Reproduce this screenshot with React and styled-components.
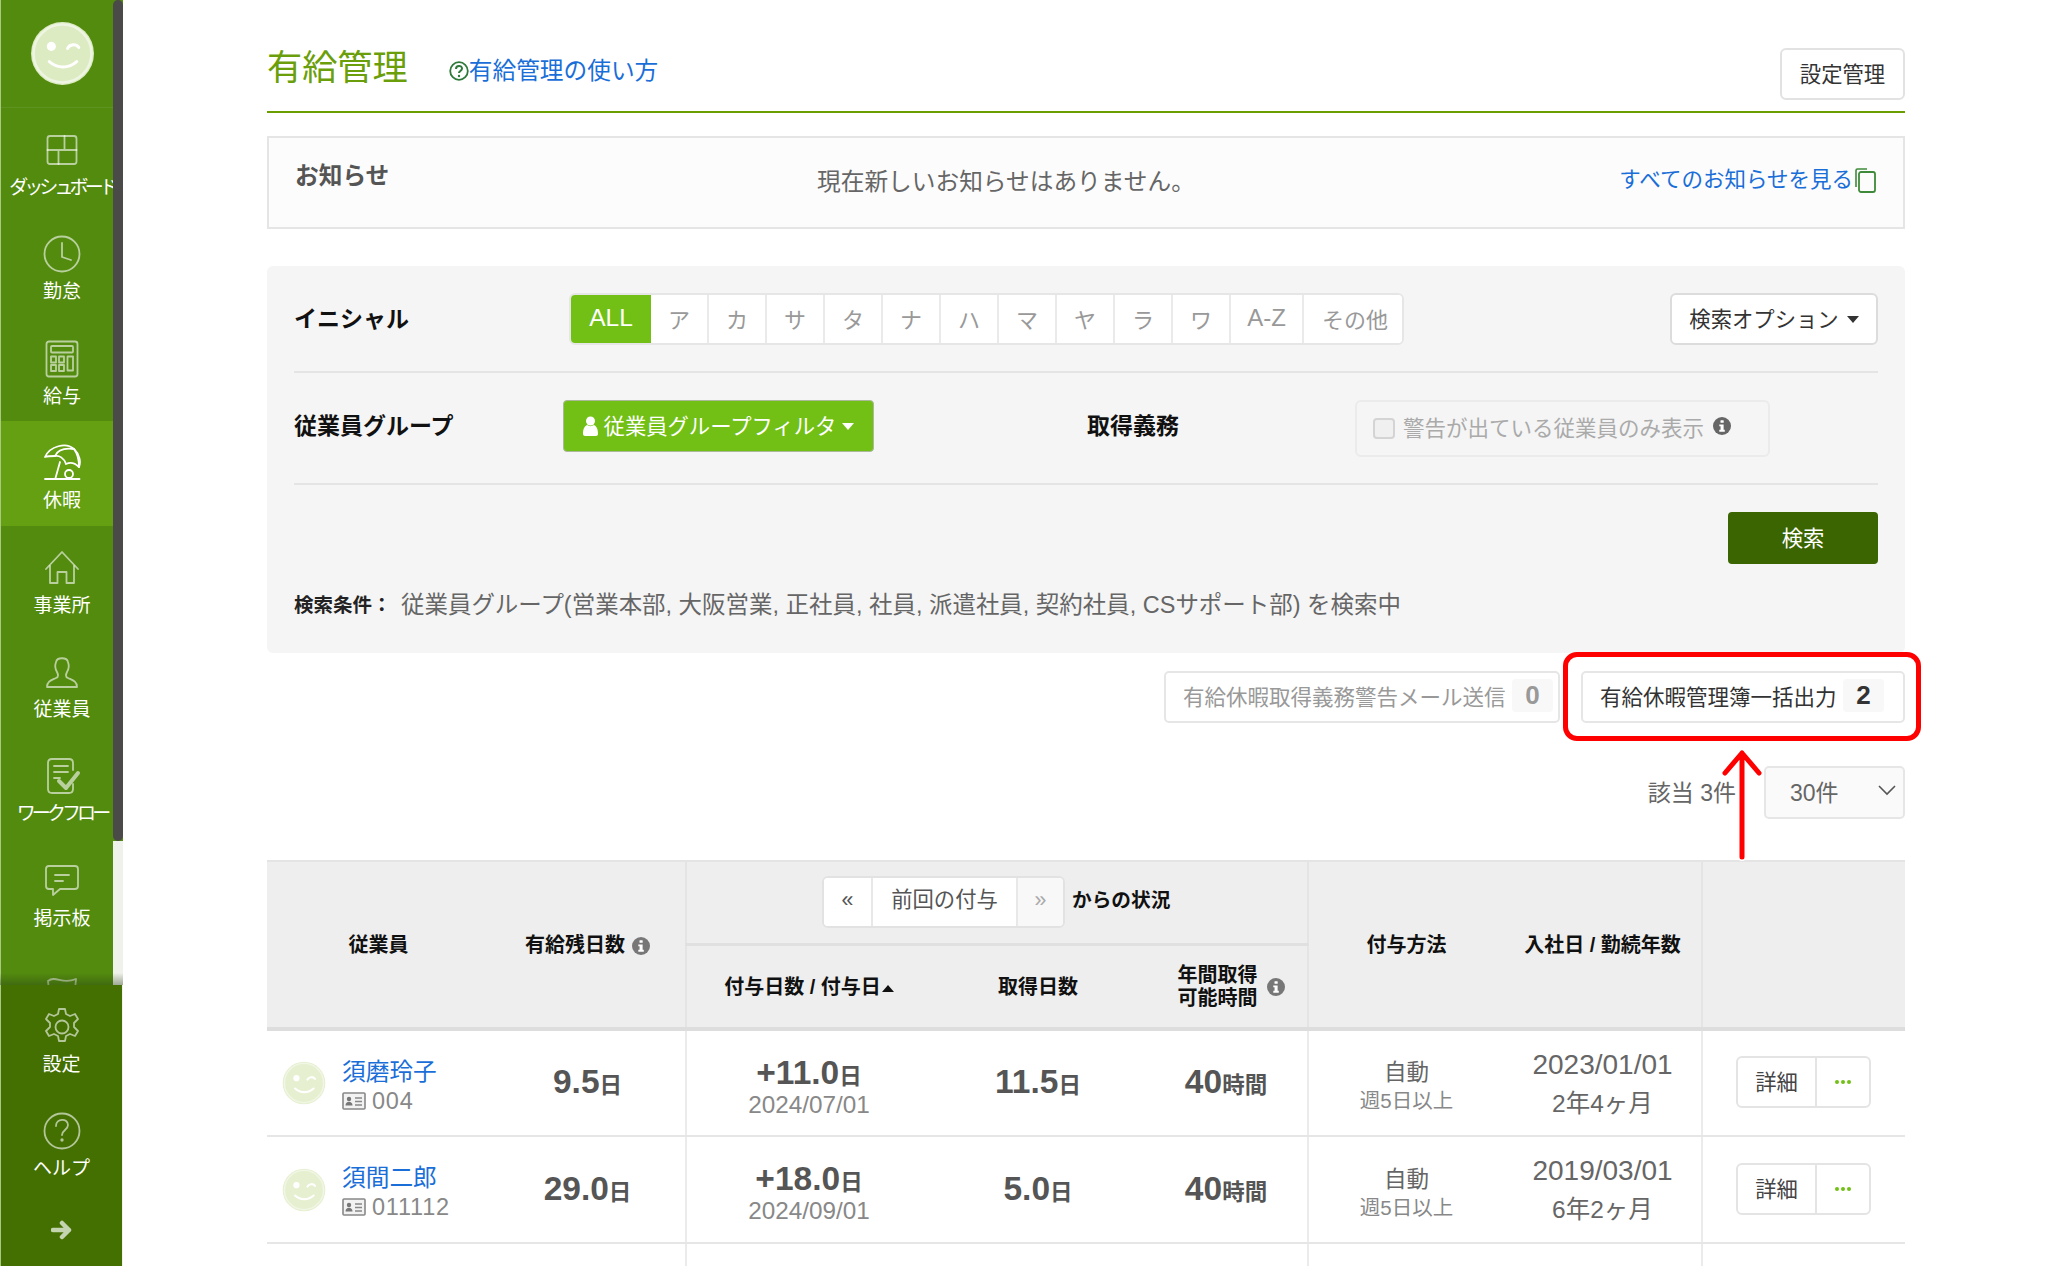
import React from 'react';
import styled, { createGlobalStyle } from 'styled-components';

const Global = createGlobalStyle`
  html, body { margin: 0; padding: 0; background: #fff; overflow: hidden; }
  body { font-family: "Liberation Sans", "Noto Sans CJK JP", sans-serif; font-size: 21.33px; color: #555; }
  * { box-sizing: border-box; }
`;

const Shell = styled.div`
  position: relative; display: flex; width: 2048px; height: 1266px; overflow: hidden; background: #fff;
`;
const Sidebar = styled.aside`
  flex: none; width: 123px; height: 1266px; display: flex; flex-direction: column; background: #eef2ea;
`;
const NavArea = styled.div`
  position: relative; height: 985px; overflow: hidden; flex: none;
`;
const NavInner = styled.nav`
  width: 123px; height: 985px; background: #528b0e; border-left: 1px solid #a9c983; overflow: hidden;
`;
const Thumb = styled.div`
  position: absolute; top: 0; left: 113px; width: 10px; height: 841px; background: #4a4a48; border-radius: 5px;
`;
const Track = styled.div`
  position: absolute; top: 841px; bottom: 0; left: 113px; width: 10px; background: #eef2ea;
`;
const Shade = styled.div`
  position: absolute; left: 0; right: 0; bottom: 0; height: 12px; background: linear-gradient(rgba(40,60,20,0), rgba(40,60,20,.4));
`;
const AvatarBox = styled.div`
  height: 108px; display: flex; align-items: center; justify-content: center; border-bottom: 1px solid #5f9320;
`;
const Item = styled.a`
  display: flex; flex-direction: column; align-items: center; height: ${p => p.$h || 104.4}px; padding-top: 22px;
  background: ${p => (p.$active ? '#64a012' : 'transparent')};
  color: ${p => (p.$active ? '#fff' : 'rgba(255,255,255,.6)')};
`;
const ItemIcon = styled.svg`
  width: 40px; height: 40px; display: block; fill: none; stroke: currentColor; stroke-width: 1.8; stroke-linejoin: round; stroke-linecap: round;
`;
const ItemLabel = styled.span`
  margin-top: 6px; color: #fff; font-size: 19px; line-height: 24px; white-space: nowrap; letter-spacing: ${p => p.$tight || 0}px;
`;
const SideBottom = styled.div`
  flex: 1; width: 122px; background: #437000; border-left: 1px solid #a9c983; padding-top: 0;
  display: flex; flex-direction: column;
`;
const ArrowBox = styled.div`
  display: flex; justify-content: center; padding-top: 27px;
`;

const Main = styled.main`
  flex: none; width: 1638px; margin-left: 144px;
`;
const Header = styled.header`
  height: 113px; display: flex; justify-content: space-between; align-items: flex-start; border-bottom: 2px solid #6a9e00;
`;
const TitleGroup = styled.div`
  margin-top: 45px; height: 46px; display: flex; align-items: center;
`;
const Title = styled.h1`
  margin: 0; font-size: 35.2px; font-weight: 400; line-height: 46px; color: #6a9e0a;
`;
const HelpLink = styled.a`
  margin: 6px 0 0 41px; display: flex; align-items: center; color: #1a6ed8; font-size: 23.7px; line-height: 30px;
`;
const Btn = styled.button`
  font: inherit; font-size: 21.33px; color: #333; background: #fff; border: 2px solid #e2e2e2; border-radius: 6px;
  height: 52px; padding: 0 0 3px; width: ${p => p.$w}px; display: flex; align-items: center; justify-content: center; gap: 8px;
`;
const SettingBtn = styled(Btn)`
  margin-top: 48px;
`;

const Notice = styled.section`
  margin-top: 23px; height: 93px; background: #fcfcfc; border: 2px solid #e5e5e5; display: grid;
  grid-template-columns: 522px 1fr auto; padding: 0 26px;
`;
const NoticeTitle = styled.div`
  padding-top: 22px; font-size: 23.7px; font-weight: 700; line-height: 32px; color: #555;
`;
const NoticeText = styled.div`
  padding-top: 28px; font-size: 23.7px; line-height: 32px; color: #666;
`;
const NoticeLink = styled.a`
  padding-top: 26px; font-size: 21.5px; line-height: 32px; color: #1a6ed8; display: flex; align-items: flex-start;
`;
const Panel = styled.section`
  margin-top: 37px; height: 387px; background: #f5f5f5; border-radius: 6px; padding: 0 27px 0 27px;
`;
const Row = styled.div`
  height: ${p => p.$h}px; padding-top: 27px; display: flex; align-items: flex-start; border-bottom: 2px solid #e4e4e4;
`;
const RowLabel = styled.div`
  width: ${p => p.$w}px; margin-left: ${p => p.$ml || 0}px; flex: none; height: 52px; line-height: 52px; font-size: 23px; font-weight: 700; color: #111; white-space: nowrap;
`;
const Initials = styled.div`
  display: flex; height: 52px; width: 835px; flex: none; background: #fff; border: 2px solid #e6e6e6; border-radius: 6px; overflow: hidden;
`;
const Initial = styled.span`
  width: ${p => p.$w}px; flex: none; display: flex; align-items: center; justify-content: center; padding-bottom: 3px;
  background: ${p => (p.$on ? '#72c015' : '#fff')}; color: ${p => (p.$on ? '#fff' : '#999')};
  border-right: ${p => (p.$last || p.$on ? 0 : '2px solid #eaeaea')}; font-size: ${p => p.$s || 22}px;
`;
const OptionBtn = styled(Btn)`
  margin-left: auto; border-color: #dcdcdc;
`;
const Caret = styled.i`
  display: inline-block; width: 0; height: 0; border-left: 6px solid transparent; border-right: 6px solid transparent;
  border-top: 7px solid ${p => p.$c || '#333'}; margin-top: 3px;
`;
const GroupBtn = styled.button`
  font: inherit; font-size: 21.33px; width: 311px; height: 52px; flex: none; background: #72c015; color: #fff; padding: 0 0 3px;
  border: 1px solid #a9b99a; border-radius: 4px; display: flex; align-items: center; justify-content: center; gap: 6px;
`;
const DutyBox = styled.label`
  margin-left: 176px; width: 415px; height: 57px; flex: none; border: 2px solid #ebebeb; border-radius: 6px;
  display: flex; align-items: center; padding: 0 0 5px 16px; color: #aaa; font-size: 21.5px;
`;
const Check = styled.span`
  width: 22px; height: 21px; flex: none; background: #f0f0f0; border: 2px solid #d4d4d4; border-radius: 4px; margin: 5px 8px 0 0;
`;
const SearchRow = styled.div`
  padding-top: 27px; display: flex; justify-content: flex-end;
`;
const SearchBtn = styled.button`
  font: inherit; font-size: 21.33px; width: 150px; height: 52px; padding: 0 0 3px; background: #3a6500; color: #fff; border: 0; border-radius: 4px;
`;
const Condition = styled.div`
  margin-top: 25px; line-height: 32px; display: flex; font-size: 23.47px; color: #666; white-space: nowrap;
`;
const CondLabel = styled.b`
  font-size: 19.5px; color: #222; width: 107px; flex: none;
`;
const ActionRow = styled.div`
  margin-top: 18px; display: flex; justify-content: flex-end; gap: 21px;
`;
const BulkBtn = styled.button`
  font: inherit; font-size: 21.5px; width: ${p => p.$w}px; height: 52px; padding: 0 19px 3px 17px; background: #fff;
  border: 2px solid #e6e6e6; border-radius: 5px; color: ${p => (p.$off ? '#999' : '#333')};
  display: flex; align-items: center; justify-content: space-between;
`;
const Badge = styled.span`
  width: 41px; height: 33px; background: #f8f8f8; border-radius: 4px; text-align: center; line-height: 32px; font-size: 26px; font-weight: 700;
  margin-right: ${p => p.$mr || 0}px;
`;
const CountRow = styled.div`
  margin-top: 43px; height: 53px; display: flex; justify-content: flex-end; align-items: center; gap: 28px; font-size: 23px; color: #666;
`;
const CountText = styled.span`
  padding-bottom: 4px;
`;
const PerPage = styled.div`
  width: 141px; height: 53px; border: 2px solid #e6e6e6; border-radius: 5px; background: #fafafa; display: flex; align-items: center;
  justify-content: space-between; padding: 0 7px 4px 24px; font-size: 23px;
`;
const Table = styled.table`
  margin-top: 41px; width: 1638px; table-layout: fixed; border-collapse: collapse; border-top: 2px solid #e4e4e4;
`;
const Th = styled.th`
  background: #eee; color: #111; font-size: 20px; font-weight: 700; line-height: 23.5px; padding: ${p => (p.$sub ? 0 : '2px 0 0')}; height: ${p => p.$h || 'auto'};
  text-align: center; border-left: ${p => (p.$div ? '2px solid #e4e4e4' : '0')};
  border-bottom: ${p => (p.$sub ? '3px solid #e0e0e0' : p.$bottom ? '4px solid #ddd' : '0')};
`;
const Td = styled.td`
  height: 107px; padding: 0; text-align: center; border-bottom: 2px solid #e6e6e6;
  border-left: ${p => (p.$div ? '2px solid #ebebeb' : '0')};
`;
const StatusWrap = styled.div`
  display: flex; align-items: center; padding-left: 135px;
`;
const Pager = styled.div`
  display: flex; height: 52px; width: 243px; border: 2px solid #e2e2e2; border-radius: 6px; overflow: hidden; background: #fff; font-weight: 400;
`;
const PageCell = styled.span`
  width: ${p => p.$w}px; flex: none; display: flex; align-items: center; justify-content: center; font-size: 21.33px; padding-bottom: 3px;
  color: ${p => (p.$off ? '#aaa' : '#555')}; background: ${p => (p.$off ? '#f8f8f8' : '#fff')};
  border-left: ${p => (p.$div ? '2px solid #e8e8e8' : '0')};
`;
const StatusText = styled.span`
  margin-left: 7px; padding-bottom: 3px; font-size: 19.7px; color: #111;
`;
const InfoWrap = styled.span`
  display: inline-flex; vertical-align: middle; margin-left: ${p => p.$ml || 7}px;
`;
const TwoLine = styled.span`
  display: inline-flex; align-items: center; gap: 9px; padding-left: 10px;
`;
const SortMark = styled.i`
  display: inline-block; width: 0; height: 0; margin-left: 1px; vertical-align: middle; border-left: 6px solid transparent;
  border-right: 6px solid transparent; border-bottom: 7px solid #111;
`;
const Emp = styled.div`
  display: flex; align-items: center; padding-left: 15px; text-align: left; gap: 16px;
`;
const EmpText = styled.div`
  padding-top: 5px;
`;
const EmpName = styled.a`
  display: block; color: #1a6ed8; font-size: 23.7px; line-height: 30px;
`;
const EmpId = styled.div`
  display: flex; align-items: center; gap: 6px; color: #888; font-size: 23.5px; letter-spacing: .8px; line-height: 28px;
`;
const Single = styled.div`
  padding-bottom: 2px;
`;
const Stack = styled.div`
  padding-top: ${p => p.$pt || 6}px;
`;
const Big = styled.b`
  font-size: 33.5px; color: #555; font-weight: 700; line-height: 38px;
`;
const Unit = styled.b`
  font-size: 22.5px; color: #555; font-weight: 700;
`;
const Muted = styled.div`
  color: #888; font-size: ${p => p.$s || 24.3}px; line-height: 28px; margin-top: -1px;
`;
const Plain = styled.div`
  color: #666; font-size: 22.5px; line-height: 30px;
`;
const Joined = styled.div`
  color: #666; font-size: ${p => p.$s}px; line-height: 39px;
`;
const ActGroup = styled.div`
  display: flex; width: 135px; height: 52px; margin: 0 0 2px 33px; border: 2px solid #e4e4e4; border-radius: 6px; overflow: hidden; background: #fff;
`;
const ActMain = styled.span`
  width: 79px; flex: none; display: flex; align-items: center; justify-content: center; padding-bottom: 3px; color: #444; border-right: 2px solid #e4e4e4;
`;
const ActMore = styled.span`
  flex: 1; display: flex; align-items: center; justify-content: center; gap: 2px;
`;
const Dot = styled.i`
  width: 4px; height: 4px; border-radius: 50%; background: #72c015;
`;
const RedBox = styled.div`
  position: absolute; left: 1563px; top: 652px; width: 358px; height: 89px; border: 5px solid #f00; border-radius: 14px; pointer-events: none;
`;
const RedArrow = styled.svg`
  position: absolute; left: 1714px; top: 745px; width: 56px; height: 116px; overflow: visible; pointer-events: none;
`;

const Smile = ({ size = 44, fill = '#e6f0d0', ring = '#f1f6e6', stroke = '#fff', sw = 2 }) => (
  <svg width={size} height={size} viewBox="0 0 64 64" style={{ flex: 'none', display: 'block' }}>
    <circle cx="32" cy="32" r="31" fill={fill} />
    <circle cx="32" cy="32" r="28.5" fill="none" stroke={ring} strokeWidth={sw} />
    <circle cx="21" cy="25" r="4.5" fill={stroke} />
    <path d="M37 27c2-4 8-5 11-1" fill="none" stroke={stroke} strokeWidth="3" strokeLinecap="round" />
    <path d="M19 40c8 7 19 7 27 0" fill="none" stroke={stroke} strokeWidth="3" strokeLinecap="round" />
  </svg>
);

const Info = ({ size = 18, c = '#777' }) => (
  <svg width={size} height={size} viewBox="0 0 20 20" style={{ display: 'block', flex: 'none' }}>
    <circle cx="10" cy="10" r="10" fill={c} />
    <rect x="8.3" y="3.5" width="3.6" height="3" rx=".6" fill="#fff" />
    <path d="M7 8.3h4.8v6h1.3v2H7v-2h1.4v-4H7z" fill="#fff" />
  </svg>
);

const IdCard = () => (
  <svg width="24" height="18" viewBox="0 0 24 18" style={{ display: 'block', flex: 'none' }}>
    <rect x="1" y="1" width="22" height="16" rx="1" fill="#f2f2f2" stroke="#888" strokeWidth="1.6" />
    <circle cx="7" cy="7" r="2.2" fill="#777" />
    <path d="M3.5 13.5c0-5 7-5 7 0z" fill="#777" />
    <path d="M13 6h7M13 9.5h7M13 13h7" stroke="#888" strokeWidth="1.4" />
  </svg>
);

const icons = {
  dash: <><rect x="5.5" y="6" width="29" height="28" rx="2.5" /><path d="M5.500 20h29M22.500 6v14M16.500 20v14" /></>,
  clock: <><circle cx="20" cy="20" r="17.5" /><path d="M20 9v14l9 3" /></>,
  calc: <><rect x="4.5" y="2.5" width="31" height="35" rx="2.5" /><rect x="9" y="7" width="22" height="6.5" rx="1" /><path d="M9 17.5h5v6H9zM17 17.5h5v6h-5zM25.5 17.5H31v14h-5.5zM9 26h5v6H9zM17 26h5v6h-5z" /></>,
  umbrella: <><path d="M3 14C8 3 24-1 32 6c6 6 7 13 5 18-4-4-9-5-13-3-2-6-7-9-11-8-3 0-7 0-10 1z" /><path d="M32 6c-8-1-16 0-19 7M37 24c0-7-2-14-5-18" /><path d="M18 19l-4.500 16M3 36h34.500" /><circle cx="27" cy="31" r="4" /></>,
  home: <><path d="M4 21 20 4l16 17" /><path d="M8 18v17h7.500V24h9v11H32V18" /></>,
  person: <><path d="M5 35c0-6 5-7 9-9 3-1 2-4 1-6-2-3-2-7-1-10 1-5 11-5 12 0 1 3 1 7-1 10-1 2-2 5 1 6 4 2 9 3 9 9z" /></>,
  flow: <><path d="M31 14V7c0-3-1-4-4-4H10C7 3 6 4 6 7v26c0 3 1 4 4 4h17c3 0 4-1 4-4v-5" /><path d="M12 10h14M12 16h14M12 22h6" /><path d="M17 25l7 7 12-15" strokeWidth="4" /></>,
  chat: <><path d="M7 5h26c2 0 3 1 3 3v17c0 2-1 3-3 3H18l-7 6v-6H7c-2 0-3-1-3-3V8c0-2 1-3 3-3z" /><path d="M13 14h14M13 20h8" /></>,
  flag: <><path d="M6 16c8-6 14 4 28-2l-2 22c-8 3-14-6-24 0z" /></>,
  gear: <><circle cx="20" cy="20" r="6.500" /><path d="M17 2h6l1 5 4 2 5-2 3 5-4 4v4l4 4-3 5-5-2-4 2-1 5h-6l-1-5-4-2-5 2-3-5 4-4v-4l-4-4 3-5 5 2 4-2z" /></>,
  help: <><circle cx="20" cy="20" r="17.500" /><path d="M14 15c0-8 12-8 12-1 0 5-6 5-6 10" /><circle cx="20" cy="29" r=".8" /></>,
};

const NavItem = ({ icon, label, active, tight, h }) => (
  <Item $active={active} $h={h}>
    <ItemIcon viewBox="0 0 40 40">{icons[icon]}</ItemIcon>
    <ItemLabel $tight={tight}>{label}</ItemLabel>
  </Item>
);

const kana = ['ア', 'カ', 'サ', 'タ', 'ナ', 'ハ', 'マ', 'ヤ', 'ラ', 'ワ'];

const rows = [
  { name: '須磨玲子', id: '004', left: '9.5', grant: '+11.0', date: '2024/07/01', used: '11.5', join: '2023/01/01', years: '2年4ヶ月' },
  { name: '須間二郎', id: '011112', left: '29.0', grant: '+18.0', date: '2024/09/01', used: '5.0', join: '2019/03/01', years: '6年2ヶ月' },
];

export default function App() {
  return (
    <Shell>
      <Global />
      <Sidebar>
        <NavArea>
          <NavInner>
            <AvatarBox><Smile size={65} fill="#dcebc1" ring="#eef5e2" stroke="#fff" sw={2.5} /></AvatarBox>
            <NavItem icon="dash" label="ダッシュボード" tight={-3.9} />
            <NavItem icon="clock" label="勤怠" />
            <NavItem icon="calc" label="給与" />
            <NavItem icon="umbrella" label="休暇" active />
            <NavItem icon="home" label="事業所" />
            <NavItem icon="person" label="従業員" />
            <NavItem icon="flow" label="ワークフロー" tight={-3.9} />
            <NavItem icon="chat" label="掲示板" />
            <NavItem icon="flag" label="" />
          </NavInner>
          <Track />
          <Thumb />
          <Shade />
        </NavArea>
        <SideBottom>
          <NavItem icon="gear" label="設定" h={104} />
          <NavItem icon="help" label="ヘルプ" h={104} />
          <ArrowBox>
            <svg width="22" height="20" viewBox="0 0 22 20"><path d="M2 10h16M11 3l7 7-7 7" fill="none" stroke="#c4d4b0" strokeWidth="4.500" strokeLinejoin="round" strokeLinecap="round" /></svg>
          </ArrowBox>
        </SideBottom>
      </Sidebar>

      <Main>
        <Header>
          <TitleGroup>
            <Title>有給管理</Title>
            <HelpLink>
              <svg width="20" height="20" viewBox="0 0 20 20" style={{ flex: 'none' }}>
                <circle cx="10" cy="10" r="8.800" fill="none" stroke="#2f7a3a" strokeWidth="1.800" />
                <path d="M7 8c0-4 6-4 6-.5 0 2.500-3 2.500-3 4.500" fill="none" stroke="#2f7a3a" strokeWidth="2" />
                <circle cx="10" cy="15" r="1.200" fill="#2f7a3a" />
              </svg>
              有給管理の使い方
            </HelpLink>
          </TitleGroup>
          <SettingBtn $w={125}>設定管理</SettingBtn>
        </Header>

        <Notice>
          <NoticeTitle>お知らせ</NoticeTitle>
          <NoticeText>現在新しいお知らせはありません。</NoticeText>
          <NoticeLink>
            すべてのお知らせを見る
            <svg width="24" height="26" viewBox="0 0 24 26" style={{ marginTop: 3 }}>
              <path d="M3 20V3.500c0-1 .5-1.500 1.500-1.500H14" fill="none" stroke="#3f8a3a" strokeWidth="1.600" />
              <rect x="6" y="5" width="16" height="20" rx="2" fill="none" stroke="#3f8a3a" strokeWidth="1.800" />
            </svg>
          </NoticeLink>
        </Notice>

        <Panel>
          <Row $h={107}>
            <RowLabel $w={275}>イニシャル</RowLabel>
            <Initials>
              <Initial $on $s={24.5} $w={80}>ALL</Initial>
              {kana.map(k => <Initial key={k} $w={58}>{k}</Initial>)}
              <Initial $s={24} $w={73}>A-Z</Initial>
              <Initial $w={102} $last>その他</Initial>
            </Initials>
            <OptionBtn $w={208}>検索オプション<Caret /></OptionBtn>
          </Row>
          <Row $h={112}>
            <RowLabel $w={269}>従業員グループ</RowLabel>
            <GroupBtn>
              <svg width="15" height="20" viewBox="0 0 15 20" style={{ marginTop: 3 }}><circle cx="7.500" cy="5" r="4.500" fill="#fff" /><path d="M0 18c0-6 2-8 4-9 2 1.500 5 1.500 7 0 2 1 4 3 4 9 0 1-1 2-2 2H2c-1 0-2-1-2-2z" fill="#fff" /></svg>
              従業員グループフィルタ
              <Caret $c="#fff" />
            </GroupBtn>
            <RowLabel $w={92} $ml={213}>取得義務</RowLabel>
            <DutyBox>
              <Check />
              警告が出ている従業員のみ表示
              <InfoWrap $ml={9}><Info c="#666" /></InfoWrap>
            </DutyBox>
          </Row>
          <SearchRow><SearchBtn>検索</SearchBtn></SearchRow>
          <Condition>
            <CondLabel>検索条件：</CondLabel>
            従業員グループ(営業本部, 大阪営業, 正社員, 社員, 派遣社員, 契約社員, CSサポート部) を検索中
          </Condition>
        </Panel>

        <ActionRow>
          <BulkBtn $w={396} $off>有給休暇取得義務警告メール送信<Badge $mr={-14}>0</Badge></BulkBtn>
          <BulkBtn $w={324}>有給休暇管理簿一括出力<Badge>2</Badge></BulkBtn>
        </ActionRow>

        <CountRow>
          <CountText>該当 3件</CountText>
          <PerPage>
            30件
            <svg width="18" height="11" viewBox="0 0 18 11"><path d="M1 1l8 8 8-8" fill="none" stroke="#555" strokeWidth="1.600" /></svg>
          </PerPage>
        </CountRow>

        <Table>
          <colgroup>
            <col style={{ width: 223 }} /><col style={{ width: 196 }} /><col style={{ width: 245 }} /><col style={{ width: 214 }} />
            <col style={{ width: 163 }} /><col style={{ width: 196 }} /><col style={{ width: 198 }} /><col style={{ width: 203 }} />
          </colgroup>
          <thead>
            <tr>
              <Th rowSpan={2} $bottom>従業員</Th>
              <Th rowSpan={2} $bottom>有給残日数<InfoWrap><Info /></InfoWrap></Th>
              <Th colSpan={3} $div $sub $h="83px">
                <StatusWrap>
                  <Pager>
                    <PageCell $w={47}>«</PageCell>
                    <PageCell $w={145} $div>前回の付与</PageCell>
                    <PageCell $w={47} $div $off>»</PageCell>
                  </Pager>
                  <StatusText>からの状況</StatusText>
                </StatusWrap>
              </Th>
              <Th rowSpan={2} $div $bottom>付与方法</Th>
              <Th rowSpan={2} $bottom>入社日 / 勤続年数</Th>
              <Th rowSpan={2} $div $bottom></Th>
            </tr>
            <tr>
              <Th $div $bottom $h="85px">付与日数 / 付与日<SortMark /></Th>
              <Th $bottom>取得日数</Th>
              <Th $bottom><TwoLine><span>年間取得<br />可能時間</span><Info /></TwoLine></Th>
            </tr>
          </thead>
          <tbody>
            {rows.map(r => (
              <tr key={r.id}>
                <Td>
                  <Emp>
                    <Smile />
                    <EmpText>
                      <EmpName>{r.name}</EmpName>
                      <EmpId><IdCard />{r.id}</EmpId>
                    </EmpText>
                  </Emp>
                </Td>
                <Td><Single><Big>{r.left}</Big><Unit>日</Unit></Single></Td>
                <Td $div>
                  <Stack>
                    <div><Big>{r.grant}</Big><Unit>日</Unit></div>
                    <Muted>{r.date}</Muted>
                  </Stack>
                </Td>
                <Td><Single><Big>{r.used}</Big><Unit>日</Unit></Single></Td>
                <Td><Single><Big>40</Big><Unit>時間</Unit></Single></Td>
                <Td $div>
                  <Stack $pt={7}>
                    <Plain>自動</Plain>
                    <Muted $s={20.5}>週5日以上</Muted>
                  </Stack>
                </Td>
                <Td>
                  <Stack $pt={1}>
                    <Joined $s={28}>{r.join}</Joined>
                    <Joined $s={24.5}>{r.years}</Joined>
                  </Stack>
                </Td>
                <Td $div>
                  <ActGroup>
                    <ActMain>詳細</ActMain>
                    <ActMore><Dot /><Dot /><Dot /></ActMore>
                  </ActGroup>
                </Td>
              </tr>
            ))}
            <tr>
              <Td /><Td /><Td $div /><Td /><Td /><Td $div /><Td /><Td $div />
            </tr>
          </tbody>
        </Table>
      </Main>

      <RedBox />
      <RedArrow viewBox="0 0 56 116">
        <path d="M28 8V112M11 28 28 8l17 20" fill="none" stroke="#fff" strokeWidth="8" strokeLinecap="round" strokeLinejoin="round" />
        <path d="M28 8V112M11 28 28 8l17 20" fill="none" stroke="#f00" strokeWidth="5" strokeLinecap="round" strokeLinejoin="round" />
      </RedArrow>
    </Shell>
  );
}
